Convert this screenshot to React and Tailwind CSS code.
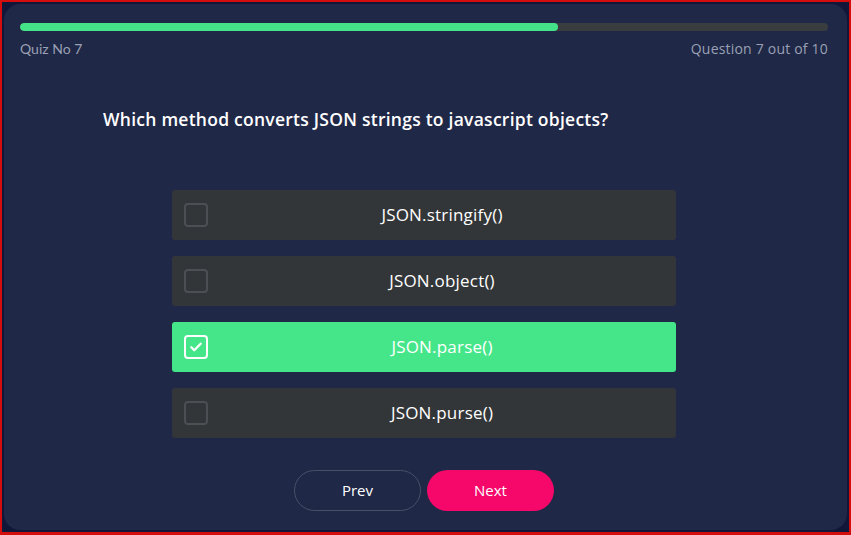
import React from "react";

const options = [
  { label: "JSON.stringify()", checked: false },
  { label: "JSON.object()", checked: false },
  { label: "JSON.parse()", checked: true },
  { label: "JSON.purse()", checked: false },
];

export default function App() {
  return (
    <div className="w-[851px] h-[535px] border-2 border-b-[3px] border-[#d40d0d] bg-[#12173a] p-[2px] font-['Open_Sans',sans-serif]">
      <div className="h-full rounded-2xl bg-[#1f2847] pl-4 pr-[19px] pt-[19px]">
        <div className="h-2 w-full rounded-full bg-[#393d40] overflow-hidden">
          <div className="h-full w-[66.6%] rounded-full bg-[#45e389]" />
        </div>
        <div className="mt-2 flex justify-between text-[14px] leading-5 text-[#9aa0b4]">
          <span className="font-['Lato',sans-serif]">Quiz No 7</span>
          <span className="tracking-[0.2px]">Question 7 out of 10</span>
        </div>
        <div className="mt-[48px] pl-[83px] text-[17.5px] leading-6 font-semibold tracking-[0.25px] text-white">
          Which method converts JSON strings to javascript objects?
        </div>
        <div className="mt-[59px] mx-auto w-[504px] flex flex-col gap-4">
          {options.map((o) => (
            <div
              key={o.label}
              className={
                o.checked
                  ? "h-[50px] rounded-[3px] bg-[#45e68a] flex items-center pl-3"
                  : "h-[50px] rounded-[3px] bg-[#333638] flex items-center pl-3"
              }
            >
              <div
                className={
                  o.checked
                    ? "w-6 h-6 shrink-0 rounded-[4px] border-2 border-white flex items-center justify-center"
                    : "w-6 h-6 shrink-0 rounded-[4px] border-2 border-[#4c4f53]"
                }
              >
                {o.checked && (
                  <svg width="14" height="14" viewBox="0 0 24 24" fill="none" stroke="white" strokeWidth="4" strokeLinecap="round" strokeLinejoin="round">
                    <path d="M4 12.5l5 5L20 6.5" />
                  </svg>
                )}
              </div>
              <span className="flex-1 text-center text-[17px] tracking-[0.2px] text-white">{o.label}</span>
            </div>
          ))}
        </div>
        <div className="mt-8 flex justify-center gap-[6px]">
          <button className="w-[127px] h-[41px] rounded-full border border-[#4a5068] text-white text-[15px] font-medium">
            Prev
          </button>
          <button className="w-[127px] h-[41px] rounded-full bg-[#f5086a] text-white text-[15px] font-medium">
            Next
          </button>
        </div>
      </div>
    </div>
  );
}
